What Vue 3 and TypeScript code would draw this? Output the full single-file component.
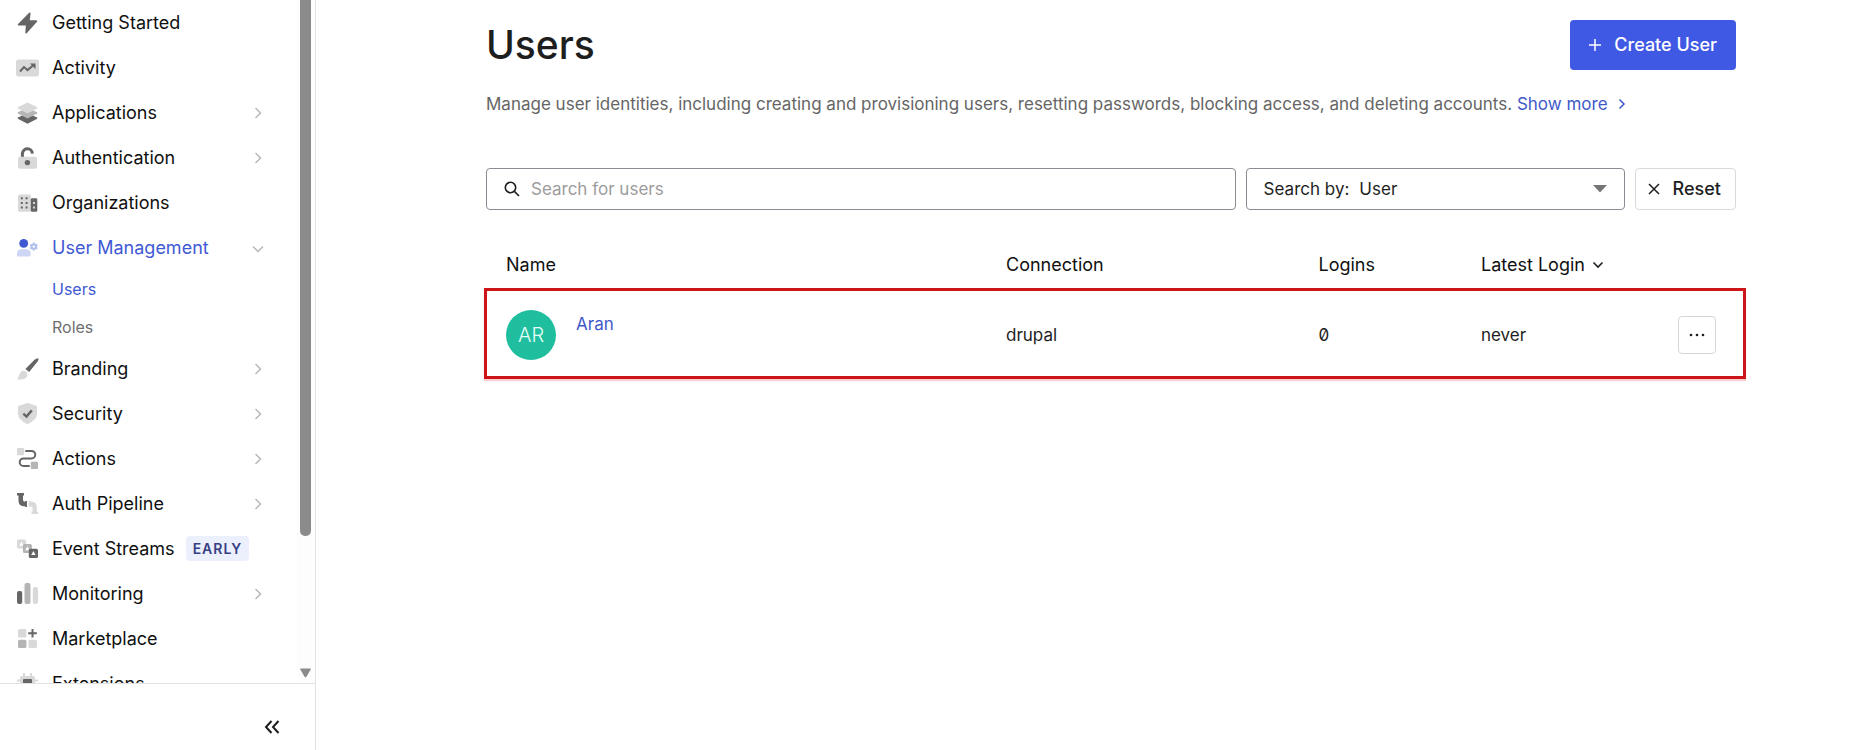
<script setup lang="ts">
import { ref } from 'vue'

interface NavItem {
  label: string
  icon: string
  chevron?: 'right' | 'down'
  badge?: string
  active?: boolean
  children?: { label: string; active?: boolean }[]
}

interface User {
  initials: string
  name: string
  connection: string
  logins: number
  latest: string
}

const navItems: NavItem[] = [
  { label: 'Getting Started', icon: 'bolt' },
  { label: 'Activity', icon: 'activity' },
  { label: 'Applications', icon: 'layers', chevron: 'right' },
  { label: 'Authentication', icon: 'lock', chevron: 'right' },
  { label: 'Organizations', icon: 'buildings' },
  {
    label: 'User Management',
    icon: 'user',
    chevron: 'down',
    active: true,
    children: [{ label: 'Users', active: true }, { label: 'Roles' }],
  },
  { label: 'Branding', icon: 'brush', chevron: 'right' },
  { label: 'Security', icon: 'shield', chevron: 'right' },
  { label: 'Actions', icon: 'flow', chevron: 'right' },
  { label: 'Auth Pipeline', icon: 'pipe', chevron: 'right' },
  { label: 'Event Streams', icon: 'events', badge: 'EARLY' },
  { label: 'Monitoring', icon: 'bars', chevron: 'right' },
  { label: 'Marketplace', icon: 'grid' },
  { label: 'Extensions', icon: 'chip' },
]

const users: User[] = [
  { initials: 'AR', name: 'Aran', connection: 'drupal', logins: 0, latest: 'never' },
]

const query = ref('')
const searchBy = ref('User')

function reset(): void {
  query.value = ''
  searchBy.value = 'User'
}
</script>

<template>
  <div class="app">
    <aside class="sidebar">
      <div class="scroll-area">
        <nav class="nav" aria-label="Main">
          <template v-for="item in navItems" :key="item.label">
            <a href="#" class="nav-item" :class="{ active: item.active }">
              <svg class="nav-icon" viewBox="0 0 24 24" aria-hidden="true">
                <path v-if="item.icon === 'bolt'" class="dark" d="M13.4 1.6 1.8 13.2q-.5 1 .8 1.2h7.2L9.3 22q.6.9 1.4.2L21.2 10.6q.4-1.2-.8-1.4h-6.6l.8-7q-.3-1-1.2-.6z" />
                <template v-else-if="item.icon === 'activity'">
                  <rect class="light" y="3.5" width="23" height="17" rx="2.5" />
                  <path class="line" d="m4 15.5 4-4.4 3.5 3L17.6 9" />
                  <path class="dark" d="M14 7.5h5.5V13z" />
                </template>
                <template v-else-if="item.icon === 'layers'">
                  <path class="dark" d="m11.5 12.2 9.7 4.3v1.3l-9.7 5-9.7-5v-1.3z" />
                  <path class="mid" d="m11.5 7 9.7 4.3v1.3l-9.7 5-9.7-5v-1.3z" />
                  <path class="light" d="m11.5 1.4 9.7 4.8v1.2l-9.7 5-9.7-5V6.2z" />
                </template>
                <template v-else-if="item.icon === 'lock'">
                  <path class="thick" d="M6.4 11V8a5 5 0 0 1 10-.4" />
                  <rect class="light" x="2" y="10.7" width="19" height="12" rx="2" />
                  <circle class="dark" cx="11.4" cy="16.6" r="2.7" />
                </template>
                <template v-else-if="item.icon === 'buildings'">
                  <rect class="light" x="2" y="3.5" width="13" height="17.3" rx="1.5" />
                  <rect class="dark" x="14.8" y="7.2" width="6.5" height="13.6" rx="1.3" />
                  <path class="dark" d="M4.8 6.2h2v2h-2zM9.6 6.2h2v2h-2zM4.8 10.9h2v2h-2zM9.6 10.9h2v2h-2zM4.8 15.5h2v2h-2zM9.6 15.5h2v2h-2z" />
                  <path class="light" d="M17 11h2v2h-2zM17 15.5h2v2h-2z" />
                </template>
                <template v-else-if="item.icon === 'user'">
                  <circle class="blue" cx="7.7" cy="7.4" r="4.4" />
                  <path class="pale-blue" d="M1 20.5v-3a4.2 4.2 0 0 1 4.2-4.3h5.3a4.2 4.2 0 0 1 4.2 4.3v1q0 2-2 2z" />
                  <circle class="gear" cx="17.8" cy="10.6" r="2.2" />
                  <path class="gear" d="M17.8 6.6v1.8m0 4.4v1.8M14.3 8.6l1.6.9m3.8 2.2 1.6.9m-7 0 1.6-.9m3.8-2.2 1.6-.9" />
                </template>
                <template v-else-if="item.icon === 'brush'">
                  <path class="dark" d="M22.3 1.2q.6 1.4-.5 3L13.2 15 9.4 12 18.5 2.8q2-1.8 3.8-1.6z" />
                  <path class="light" d="M5.4 14.6c1.9-1.6 4.8-.8 5.8 1.7 1.1 3-1.3 5.6-4.4 5.9-2 .2-4 .4-5.7-.3 2.4-1.8 1.6-5.3 4.3-7.3z" />
                </template>
                <template v-else-if="item.icon === 'shield'">
                  <path class="light" d="M11.5 1 20.2 3.7q.8.3.8 1.2v7q0 5.5-9.5 10.3Q2 17.4 2 11.9v-7q0-.9.8-1.2z" />
                  <path class="check" d="m7.3 11.7 3.2 2.9 5.3-6.2" />
                </template>
                <template v-else-if="item.icon === 'flow'">
                  <rect class="light" x="1" y="1" width="7.2" height="7.2" rx="1" />
                  <rect class="mid" x="14.8" y="14.8" width="7.2" height="7.2" rx="1" />
                  <path class="line" stroke-linecap="round" d="M10 3.9h5.5a3.7 3.7 0 0 1 0 7.5h-8a3.8 3.8 0 0 0 0 7.6H13" />
                </template>
                <template v-else-if="item.icon === 'pipe'">
                  <path class="dark" d="M1 1h7v2.500H7v4.300q0 2 2 2h.2V9H11v6H9.200v-.8H7.500q-5-.5-5-5.500V3.500H1z" />
                  <path class="light" d="M12.6 9h1.700v.7h1.900q4.600.6 4.600 5.200v4.900H22V22h-6.500v-2.200h1v-4q0-1.600-2.200-1.600v.8h-1.700z" />
                </template>
                <template v-else-if="item.icon === 'events'">
                  <rect class="light" x="1" y="2.5" width="9" height="9" rx="1.5" />
                  <path class="white" d="m5.5 4.8 2.2 4H3.3z" />
                  <rect class="mid" x="6.9" y="7" width="9" height="9" rx="1.5" />
                  <path class="white" d="m11.4 9.2 2.2 4H9.2z" />
                  <rect class="dark" x="12.8" y="11.8" width="9.2" height="9.2" rx="1.5" />
                  <path class="white" d="m17.4 14 2.2 4h-4.4z" />
                </template>
                <template v-else-if="item.icon === 'bars'">
                  <rect class="dark" x="1" y="9" width="5.2" height="13" rx="2" />
                  <rect class="mid" x="8.5" y="1" width="6" height="21" rx="2" />
                  <rect class="light" x="16.8" y="5" width="5.2" height="17" rx="2" />
                </template>
                <template v-else-if="item.icon === 'grid'">
                  <rect class="light" x="2" y="2" width="8.4" height="8.4" rx="1.5" />
                  <rect class="mid" x="2" y="12.7" width="8.4" height="8.4" rx="1.5" />
                  <rect class="light" x="12.5" y="12.7" width="8.4" height="8.4" rx="1.5" />
                  <path class="line" d="M16.5 2v8.6M12.2 6.3h8.6" />
                </template>
                <template v-else>
                  <path class="chip-pins" d="M8 1v5m7-5v5M1 8.5h21M1 15h21" />
                  <rect class="light" x="4" y="4" width="15" height="15" rx="2" />
                  <rect class="dark" x="7" y="7" width="9" height="9" rx="1" />
                </template>
              </svg>
              <span>{{ item.label }}</span>
              <span v-if="item.badge" class="badge">{{ item.badge }}</span>
              <svg v-if="item.chevron" class="chevron" viewBox="0 0 12 12" aria-hidden="true">
                <path v-if="item.chevron === 'right'" d="m3.5 1 5 5-5 5" />
                <path v-else d="m1 4.5 5 5 5-5" />
              </svg>
            </a>
            <a
              v-for="child in item.children"
              :key="child.label"
              href="#"
              class="nav-child"
              :class="{ active: child.active }"
            >{{ child.label }}</a>
          </template>
        </nav>
        <div class="scrollbar" aria-hidden="true">
          <div class="thumb"></div>
          <svg class="scroll-arrow" viewBox="0 0 12 10"><path d="M1 0h10q1.5 0 .7 1.3L7 9q-1 1.3-2 0L.3 1.3Q-.5 0 1 0z" /></svg>
        </div>
      </div>
      <div class="sidebar-foot">
        <button type="button" class="collapse" aria-label="Collapse sidebar">
          <svg viewBox="0 0 16 14" aria-hidden="true"><path d="M7.5 1 2 7l5.5 6M14.5 1 9 7l5.5 6" /></svg>
        </button>
      </div>
    </aside>

    <main class="main">
      <header class="page-head">
        <h1>Users</h1>
        <button type="button" class="create">
          <svg viewBox="0 0 14 14" aria-hidden="true"><path d="M7 1v12M1 7h12" /></svg>
          Create User
        </button>
      </header>
      <p class="intro">
        Manage user identities, including creating and provisioning users, resetting passwords, blocking access, and deleting accounts.
        <a href="#">Show more<svg viewBox="0 0 8 12" aria-hidden="true"><path d="m1.5 1.5 4.5 4.5-4.5 4.5" /></svg></a>
      </p>

      <form class="filters" @submit.prevent>
        <label class="search">
          <svg viewBox="0 0 16 16" aria-hidden="true"><circle cx="6.5" cy="6.5" r="5.2" /><path d="m10.4 10.4 4.6 4.6" /></svg>
          <input v-model="query" type="text" placeholder="Search for users" aria-label="Search for users">
        </label>
        <label class="search-by">
          <span>Search by:</span>
          <select v-model="searchBy">
            <option>User</option>
            <option>Email</option>
          </select>
          <svg viewBox="0 0 14 8" aria-hidden="true"><path d="M0 0h14L7 7.5z" /></svg>
        </label>
        <button type="button" class="reset" @click="reset">
          <svg viewBox="0 0 12 12" aria-hidden="true"><path d="m1 1 10 10M11 1 1 11" /></svg>
          Reset
        </button>
      </form>

      <div class="table-wrap">
        <table>
          <thead>
            <tr>
              <th class="col-name">Name</th>
              <th class="col-connection">Connection</th>
              <th class="col-logins">Logins</th>
              <th class="col-latest" colspan="2">
                Latest Login
                <svg viewBox="0 0 12 12" aria-hidden="true"><path d="m1.5 3.5 4.5 4.5 4.5-4.5" /></svg>
              </th>
            </tr>
          </thead>
          <tbody>
            <tr v-for="user in users" :key="user.name">
              <td>
                <div class="person">
                  <span class="avatar">{{ user.initials }}</span>
                  <a href="#">{{ user.name }}</a>
                </div>
              </td>
              <td>{{ user.connection }}</td>
              <td class="number">{{ user.logins }}</td>
              <td>{{ user.latest }}</td>
              <td class="menu-cell">
                <button type="button" class="more" aria-label="More actions">
                  <svg viewBox="0 0 16 4" aria-hidden="true"><circle cx="2" cy="2" r="1.3" /><circle cx="8" cy="2" r="1.3" /><circle cx="14" cy="2" r="1.3" /></svg>
                </button>
              </td>
            </tr>
          </tbody>
        </table>
        <div class="highlight"></div>
      </div>
    </main>
  </div>
</template>

<style>
body {
  margin: 0;
  background: #fff;
}
</style>

<style scoped>
* {
  box-sizing: border-box;
}

.app {
  display: flex;
  min-height: 100vh;
  font-family: Inter, "Liberation Sans", sans-serif;
  font-size: 17px;
  line-height: 26px;
  color: #1e1e1e;
}

a {
  color: #3f59c8;
  text-decoration: none;
}

button,
input,
select {
  font: inherit;
  color: inherit;
}

button {
  cursor: pointer;
}

svg {
  display: block;
  flex: none;
  fill: none;
  stroke: none;
}

.sidebar {
  display: flex;
  flex-direction: column;
  flex: 0 0 316px;
  height: 100vh;
  border-right: 1px solid #e2e2e2;
}

.scroll-area {
  display: flex;
  flex: 1;
  min-height: 0;
}

.nav {
  flex: 1;
  overflow: hidden;
}

.nav-item {
  display: flex;
  align-items: center;
  height: 45px;
  padding: 0 33px 0 16px;
  font-size: 18px;
  color: #101010;
}

.nav-item.active,
.nav-child.active {
  color: #3f59d4;
}

.nav-icon {
  width: 24px;
  height: 24px;
  margin-right: 12px;
}

.dark {
  fill: #656565;
}

.mid {
  fill: #b5b5b5;
}

.light {
  fill: #d9d9d9;
}

.white {
  fill: #fff;
}

.blue {
  fill: #3f59d4;
}

.pale-blue {
  fill: #cdd6f5;
}

.line {
  stroke: #656565;
  stroke-width: 2;
}

.check {
  stroke: #656565;
  stroke-width: 2.4;
}

.thick {
  stroke: #656565;
  stroke-width: 3;
}

.gear {
  stroke: #b3bfee;
  stroke-width: 2;
}

.chip-pins {
  stroke: #d9d9d9;
  stroke-width: 2;
}

.chevron {
  width: 12px;
  height: 12px;
  margin-left: auto;
  stroke: #b5b5b5;
  stroke-width: 1.4;
}

.nav-child {
  display: flex;
  align-items: center;
  height: 38px;
  padding-left: 52px;
  font-size: 16px;
  color: #6f6f6f;
}

.badge {
  margin-left: 11px;
  padding: 0 7px;
  border-radius: 4px;
  background: #ecf0fd;
  color: #363f83;
  font-size: 14px;
  font-weight: 600;
  line-height: 25px;
  letter-spacing: 1px;
}

.scrollbar {
  display: flex;
  flex-direction: column;
  justify-content: space-between;
  flex: 0 0 18px;
  padding: 0 4px 5px 3px;
  background: #fdfdfd;
}

.thumb {
  flex: 0 0 79%;
  border-radius: 0 0 5px 5px;
  background: #8b8b8b;
}

.scroll-arrow {
  width: 11px;
  height: 10px;
  fill: #8b8b8b;
}

.sidebar-foot {
  display: flex;
  justify-content: flex-end;
  align-items: center;
  height: 67px;
  padding: 20px 31px 0 0;
  border-top: 1px solid #e2e2e2;
}

.collapse {
  padding: 4px;
  border: 0;
  background: none;
}

.collapse svg {
  width: 16px;
  height: 14px;
  stroke: #1e1e1e;
  stroke-width: 2;
}

.main {
  flex: 1;
  min-width: 0;
  padding: 20px 117px 40px 170px;
}

.page-head {
  display: flex;
  justify-content: space-between;
  align-items: center;
}

h1 {
  margin: 0;
  font-size: 39px;
  font-weight: 500;
  line-height: 50px;
}

.create {
  display: flex;
  align-items: center;
  gap: 12px;
  height: 50px;
  padding: 0 19px 0 18px;
  border: 0;
  border-radius: 4px;
  background: #3f59e4;
  color: #fff;
  font-size: 18px;
  font-weight: 500;
}

.create svg {
  width: 14px;
  height: 14px;
  stroke: #fff;
  stroke-width: 1.5;
}

.intro {
  margin: 21px 0 51px;
  color: #656565;
}

.intro a svg {
  display: inline-block;
  width: 8px;
  height: 12px;
  margin-left: 10px;
  stroke: #3f59c8;
  stroke-width: 1.5;
}

.filters {
  display: flex;
  gap: 10px;
}

.search,
.search-by {
  display: flex;
  align-items: center;
  height: 42px;
  border: 1px solid #8b8b93;
  border-radius: 4px;
}

.search {
  flex: 1;
  padding-left: 17px;
}

.search svg {
  width: 16px;
  height: 16px;
  stroke: #1e1e1e;
  stroke-width: 1.6;
}

.search input {
  flex: 1;
  min-width: 0;
  margin-left: 11px;
  padding: 0;
  border: 0;
  outline: 0;
  background: none;
}

.search input::placeholder {
  color: #9c9c9c;
}

.search-by {
  flex: 0 0 379px;
  padding: 0 17px;
}

.search-by select {
  flex: 1;
  margin-left: 10px;
  padding: 0;
  border: 0;
  outline: 0;
  background: none;
  appearance: none;
}

.search-by svg {
  width: 14px;
  height: 8px;
  fill: #757575;
}

.reset {
  display: flex;
  align-items: center;
  gap: 13px;
  height: 42px;
  padding: 0 14px 0 12px;
  border: 1px solid #dadada;
  border-radius: 4px;
  background: #fff;
  font-size: 18px;
  font-weight: 500;
}

.reset svg {
  width: 12px;
  height: 12px;
  stroke: #1e1e1e;
  stroke-width: 1.5;
}

.table-wrap {
  position: relative;
  margin-top: 30px;
}

table {
  width: 100%;
  border-collapse: collapse;
  table-layout: fixed;
}

th,
td {
  padding: 0 20px;
  text-align: left;
}

th {
  height: 50px;
  color: #101010;
  font-size: 18px;
  font-weight: 400;
}

td {
  height: 90px;
}

.col-name {
  width: 40%;
}

.col-connection {
  width: 25%;
}

.col-logins {
  width: 13%;
}

th svg {
  display: inline-block;
  width: 12px;
  height: 12px;
  margin-left: 2px;
  stroke: #1e1e1e;
  stroke-width: 1.6;
}

.person {
  display: flex;
  gap: 20px;
}

.person a {
  line-height: 28px;
}

.avatar {
  display: flex;
  align-items: center;
  justify-content: center;
  width: 50px;
  height: 50px;
  border-radius: 50%;
  background: #1fbe9f;
  color: #e6fff8;
  font-size: 20px;
  font-weight: 300;
}

.number {
  font-feature-settings: "zero";
}

.menu-cell {
  text-align: right;
}

.more {
  display: inline-flex;
  align-items: center;
  justify-content: center;
  width: 38px;
  height: 38px;
  padding: 0;
  border: 1px solid #d6d6d6;
  border-radius: 4px;
  background: #fff;
  vertical-align: middle;
}

.more svg {
  width: 16px;
  height: 4px;
  fill: #1e1e1e;
}

.highlight {
  position: absolute;
  inset: 48px -10px 1px -2px;
  border: 3px solid #cb1519;
  box-shadow: 0 2px 1px #f9d0d0;
  pointer-events: none;
}
</style>
